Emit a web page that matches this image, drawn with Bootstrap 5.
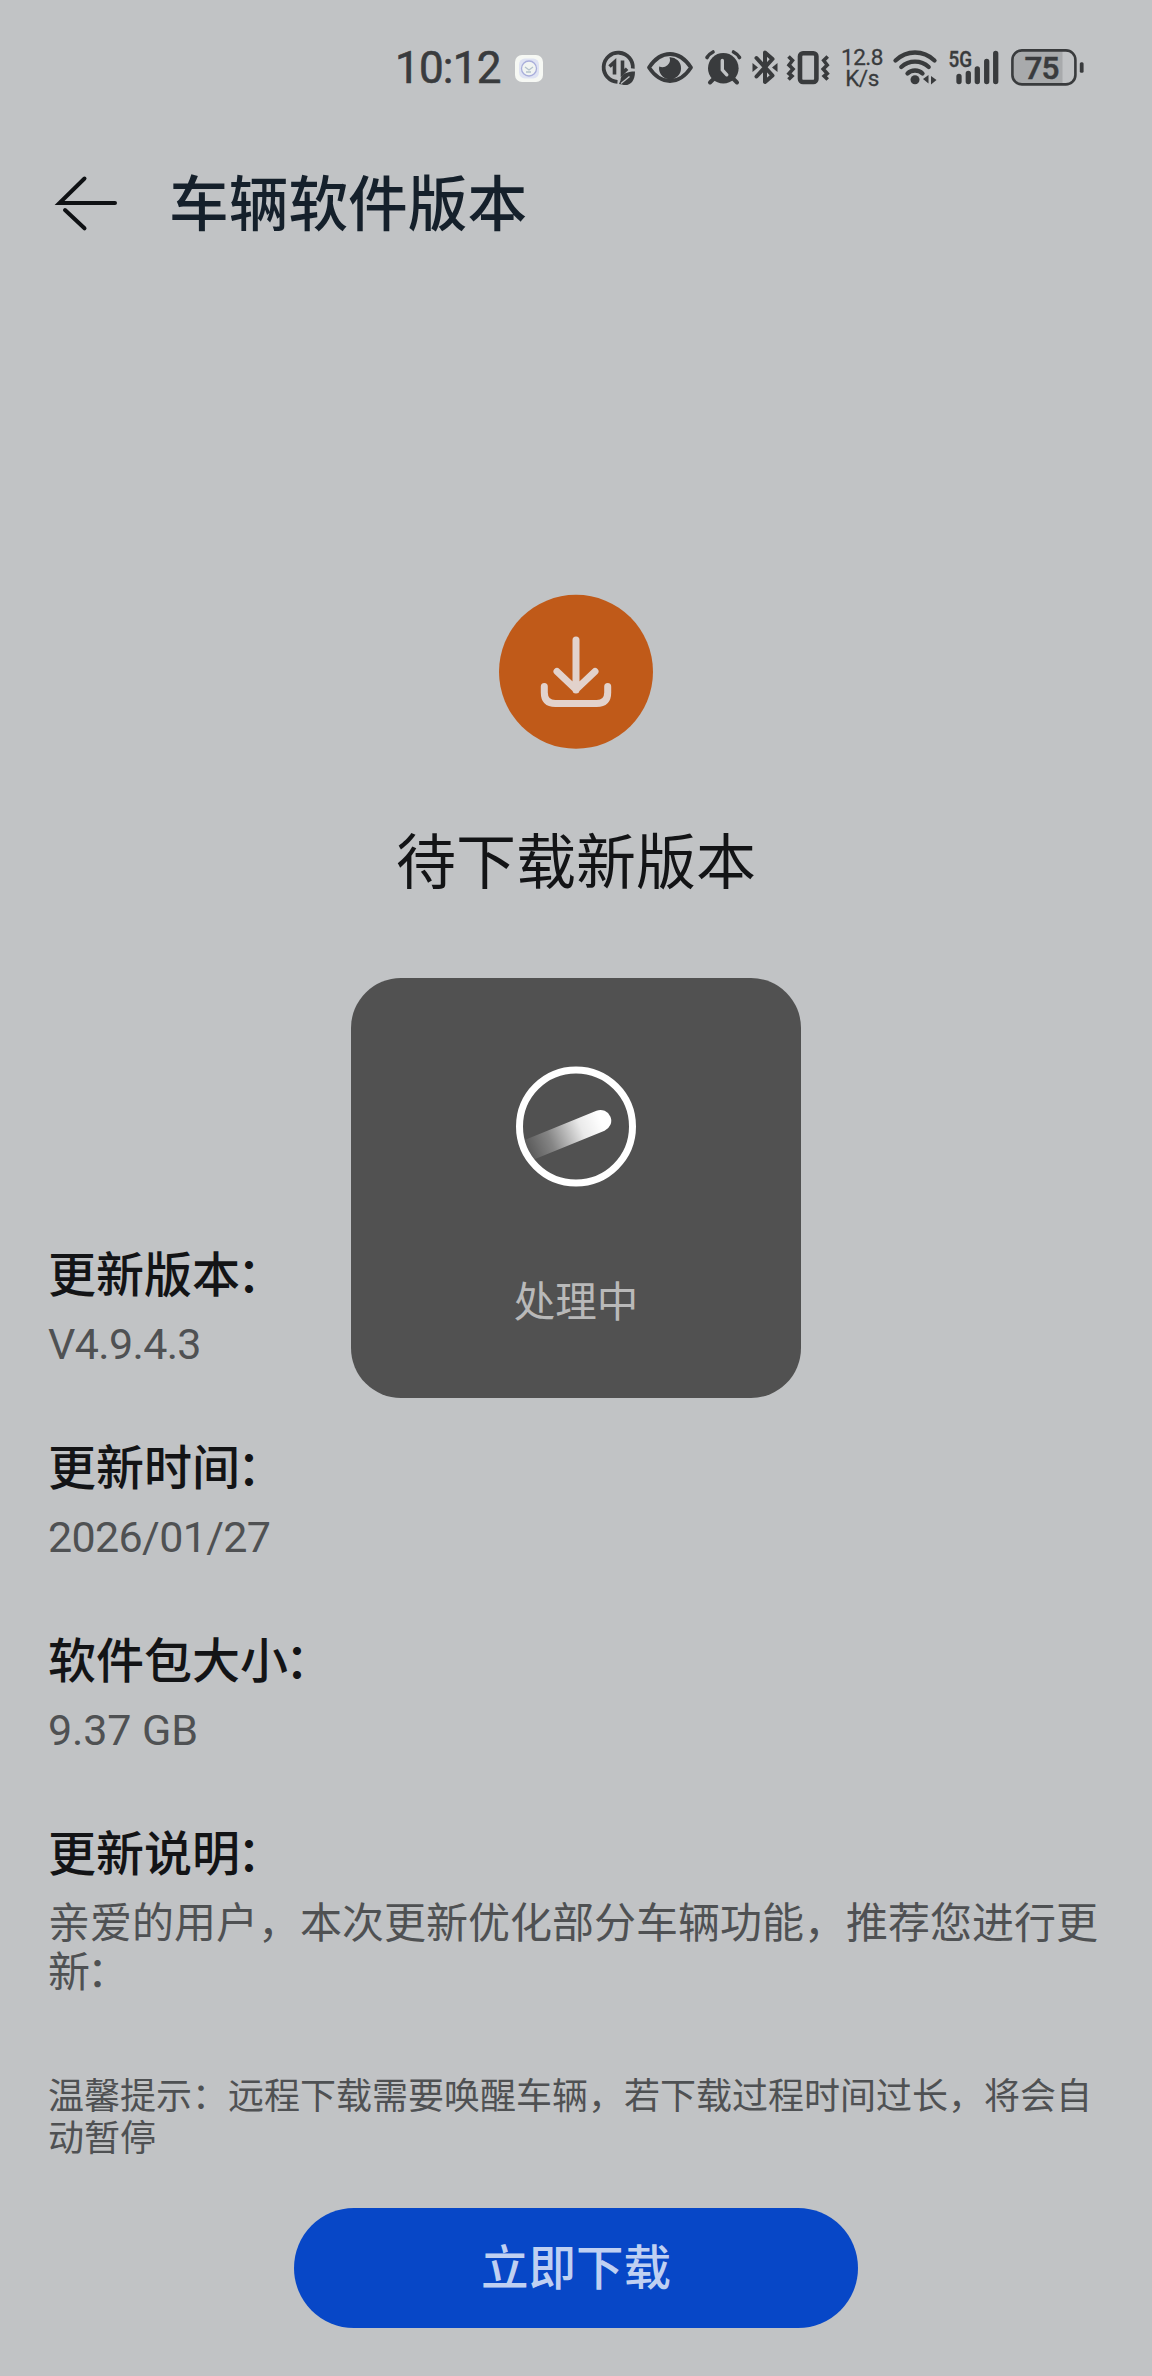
<!DOCTYPE html>
<html lang="zh-CN">
<head>
<meta charset="utf-8">
<meta name="viewport" content="width=device-width, initial-scale=1">
<title>车辆软件版本</title>
<link href="https://cdn.jsdelivr.net/npm/bootstrap@5.3.0/dist/css/bootstrap.min.css" rel="stylesheet">
<style>
  body { background: #c1c3c5; color: #131416; font-family: "Noto Sans CJK SC", sans-serif; }
  .screen { width: 1152px; height: 2376px; }
  .latin { font-family: Roboto, "Noto Sans CJK SC", sans-serif; }
  .status-bar { height: 92px; padding: 44px 0 0 395px; color: #393b3d; }
  .status-bar svg { height: 48px; flex: none; }
  .clock { width: 110px; font-size: 44px; line-height: 49px; letter-spacing: -.8px; -webkit-text-stroke: .6px; }
  .net-speed { width: 48px; margin-left: 8px; font-size: 22.5px; letter-spacing: -.5px; padding: 3px 6px 0 0; -webkit-text-stroke: .3px; }
  .net-speed div { line-height: 21px; }
  .page-head { height: 110px; margin-top: 68px; padding-left: 54px; margin-bottom: 324px; }
  .page-title { font-size: 59.7px; line-height: 80px; color: #15202b; font-weight: 500; margin-left: 49px; padding-bottom: 6px; }
  .hero-title { font-size: 60px; line-height: 80px; margin: 68px 0 338px; }
  .info { padding: 0 48px; }
  .info-label { font-size: 48px; line-height: 70px; height: 70px; font-weight: 500; color: #131416; }
  .colon { margin-left: -3px; }
  .info-value { font-size: 43px; line-height: 70px; margin-top: 3px; margin-bottom: 50px; color: #4f5153; letter-spacing: -.65px; }
  .info-value.size { letter-spacing: -.1px; }
  .note { font-size: 42px; line-height: 49px; height: 98px; margin: 10px 0 0; color: #4f5153; }
  .tip { font-size: 36px; line-height: 42px; margin: 79px 0 52px; color: #4f5153; }
  .btn-download { width: 564px; height: 120px; background: #0747c7; color: #bfd0f2; font-size: 47.5px; font-weight: 500; line-height: 1; padding-bottom: 12px; }
  .btn-download:hover { background: #0747c7; color: #bfd0f2; }
  .loading { width: 450px; height: 420px; left: 351px; top: 978px; border-radius: 50px; background: #515151; color: #b9b9b9; padding-top: 88px; }
  .loading-text { font-size: 41.5px; line-height: 60px; margin-top: 82px; }
</style>
<script src="https://cdn.jsdelivr.net/npm/bootstrap@5.3.0/dist/js/bootstrap.bundle.min.js"></script>
</head>
<body>
<div class="screen position-relative overflow-hidden">

  <div class="status-bar latin d-flex">
    <div class="clock text-nowrap">10:12</div>
    <!-- app notification -->
    <svg width="95" viewBox="505 44 95 48">
      <rect x="515" y="55" width="28" height="27" rx="7" fill="#f6f8f4"/>
      <rect x="519" y="58.500" width="20" height="20" rx="6" fill="#dfe3f3"/>
      <circle cx="529" cy="68.500" r="7.500" fill="#f1f4f2" stroke="#a9aedb" stroke-width="1.300"/>
      <path d="M525 67l4 3 4-3M526 72h5" fill="none" stroke="#b4c2cc" stroke-width="1.300"/>
    </svg>
    <!-- data saver -->
    <svg width="42" viewBox="600 44 42 48" fill="none" stroke="currentColor" stroke-width="3.800">
      <path d="M632.800 68.500A14.600 14.600 0 1 0 617.500 81.900"/>
      <path d="M609.500 66.500l5-4.500v12.500M622.500 60.500v12.500l4.600-4.300" stroke-width="3.600"/>
      <path d="M635 71.500c-8 0-14.500 2.500-14.500 9l-1.500 3.500 3 .500c6 2 13-1 13-13z" fill="currentColor" stroke="none"/>
      <path d="M621 83.500l8.500-7" stroke="#c1c3c5" stroke-width="1.300"/>
    </svg>
    <!-- eye comfort -->
    <svg width="56" viewBox="642 44 56 48">
      <path d="M649 67.500C654 60 661 54 670 54s16 6 21 13.500C686 75 679 81 670 81s-16-6-21-13.500z" fill="none" stroke="currentColor" stroke-width="3.800" stroke-linejoin="round"/>
      <path d="M669.500 57.200a11 11 0 1 1-10.300 9.200a7.500 7.500 0 0 0 10.300-9.200z" fill="currentColor"/>
    </svg>
    <!-- alarm -->
    <svg width="50" viewBox="698 44 50 48" stroke="currentColor" stroke-linecap="round" fill="none">
      <circle cx="723.300" cy="68.300" r="15.300" fill="currentColor" stroke="none"/>
      <path d="M707 57.500q2-3.500 6-5.500M733.500 52q4 2 6 5.500" stroke-width="3.600"/>
      <path d="M714 78.500l-4 4M733 78.500l4 4" stroke-width="4"/>
      <path d="M722.300 60.500v9.300l4.500 5" stroke="#c1c3c5" stroke-width="3.400"/>
    </svg>
    <!-- bluetooth -->
    <svg width="34" viewBox="748 44 34 48" stroke="currentColor" fill="none">
      <path d="M756.500 58l16 17.500-7.500 6.500V52.500l7.500 6.500-16 17.500" stroke-width="4" stroke-linejoin="round" stroke-linecap="round"/>
      <path d="M752.500 63l5.500 4.500-5.500 4.500zM777.500 63l-5.500 4.500 5.500 4.500z" fill="currentColor" stroke="none"/>
    </svg>
    <!-- vibrate -->
    <svg width="51" viewBox="782 44 51 48" stroke="currentColor" fill="none">
      <rect x="800" y="53.200" width="16.400" height="28.800" rx="3" stroke-width="4.600"/>
      <path d="M788.500 56.500l4 4-3.500 4.500 4 4-4 4.500 3 2.500-3.500 3.500M827.700 56.500l-4 4 3.500 4.500-4 4 4 4.500-3 2.500 3.500 3.500" stroke-width="3.600"/>
    </svg>
    <div class="net-speed text-center text-nowrap"><div>12.8</div><div>K/s</div></div>
    <!-- wi-fi -->
    <svg width="51" viewBox="889 44 51 48" stroke="currentColor" fill="none" stroke-linecap="round">
      <path d="M895.500 60.500Q904 52.500 915 52.500T934.500 60.500M901.300 67Q907 61.700 915 61.700T928.700 67M907.500 73.500Q910.500 70.500 915 70.500T922.500 73.500" stroke-width="4.300"/>
      <circle cx="915" cy="79.700" r="4.500" fill="currentColor" stroke="none"/>
      <path d="M928.500 75v8.500l-5.500-4.500zM931 76v8.500l5.500-4.500z" fill="currentColor" stroke="none"/>
    </svg>
    <!-- cellular signal -->
    <svg width="66" viewBox="940 44 66 48">
      <text x="948.500" y="67" font-size="21.500" font-weight="500" textLength="23.500" lengthAdjust="spacingAndGlyphs" fill="currentColor" stroke="currentColor" stroke-width=".4">5G</text>
      <path d="M959 76.500v5M968.300 73.500v8M977.300 69v12.500M986.700 61.500v20M995.700 53.500v28" stroke="currentColor" stroke-width="5.300" stroke-linecap="round"/>
    </svg>
    <!-- battery -->
    <svg width="82" viewBox="1006 44 82 48">
      <path d="M1022 50.500H1062.500V84.200H1022a9.500 9.500 0 0 1-9.500-9.500V60a9.500 9.500 0 0 1 9.500-9.500z" fill="#a8aaac"/>
      <rect x="1012.400" y="50.400" width="63" height="34" rx="9.500" fill="none" stroke="currentColor" stroke-width="2.600"/>
      <rect x="1079.800" y="62.300" width="3.800" height="10.500" rx="1.500" fill="currentColor"/>
      <text x="1024.500" y="78.500" font-size="31.500" font-weight="500" stroke="currentColor" stroke-width=".5" textLength="35" fill="currentColor">75</text>
    </svg>
  </div>

  <header class="page-head d-flex align-items-start">
    <div class="d-flex align-items-center">
      <svg width="66" height="60" viewBox="54 174 66 60" fill="none" stroke="#0f1114" stroke-width="4" stroke-linecap="round">
        <path d="M84.500 179.500L59.500 204H115M65 211l19.500 18.300"/>
      </svg>
      <h1 class="page-title mb-0">车辆软件版本</h1>
    </div>
  </header>

  <section class="text-center">
    <svg class="d-block mx-auto" width="156" height="156" viewBox="498 594 156 156" fill="none" stroke="#e2d2cc" stroke-width="7" stroke-linecap="round" stroke-linejoin="round">
      <circle cx="576" cy="671.800" r="77" fill="#c05a19" stroke="none"/>
      <path d="M576 640v50M557 671.500l19 18 19-18M544.300 686.500v6q0 11 11 11h41.400q11 0 11-11v-6"/>
    </svg>
    <h2 class="hero-title fw-normal">待下载新版本</h2>
  </section>

  <main class="info">
    <div class="info-label">更新版本<span class="colon">：</span></div>
    <div class="info-value latin">V4.9.4.3</div>
    <div class="info-label">更新时间<span class="colon">：</span></div>
    <div class="info-value latin">2026/01/27</div>
    <div class="info-label">软件包大小<span class="colon">：</span></div>
    <div class="info-value size latin">9.37 GB</div>
    <div class="info-label">更新说明<span class="colon">：</span></div>
    <p class="note">亲爱的用户，本次更新优化部分车辆功能，推荐您进行更新<span class="colon">：</span></p>
    <p class="tip">温馨提示：远程下载需要唤醒车辆，若下载过程时间过长，将会自动暂停</p>
  </main>

  <div class="d-flex justify-content-center">
    <button type="button" class="btn btn-download rounded-pill border-0">立即下载</button>
  </div>

  <div class="loading position-absolute text-center" role="status">
    <svg class="d-block mx-auto" width="120" height="121" viewBox="516 1066 120 121" fill="none">
      <defs>
        <linearGradient id="trail" gradientUnits="userSpaceOnUse" x1="524" y1="1153" x2="601" y2="1121">
          <stop offset="0" stop-color="#fff" stop-opacity="0"/>
          <stop offset=".35" stop-color="#fff" stop-opacity=".3"/>
          <stop offset=".75" stop-color="#fff" stop-opacity=".88"/>
          <stop offset="1" stop-color="#fff"/>
        </linearGradient>
        <clipPath id="ring"><circle cx="576" cy="1126.500" r="55"/></clipPath>
      </defs>
      <path d="M520 1153.500L600.500 1120.700" stroke="url(#trail)" stroke-width="21.500" stroke-linecap="round" clip-path="url(#ring)"/>
      <circle cx="576" cy="1126.500" r="56.500" stroke="#fff" stroke-width="7"/>
    </svg>
    <div class="loading-text">处理中</div>
  </div>
</div>
</body>
</html>
